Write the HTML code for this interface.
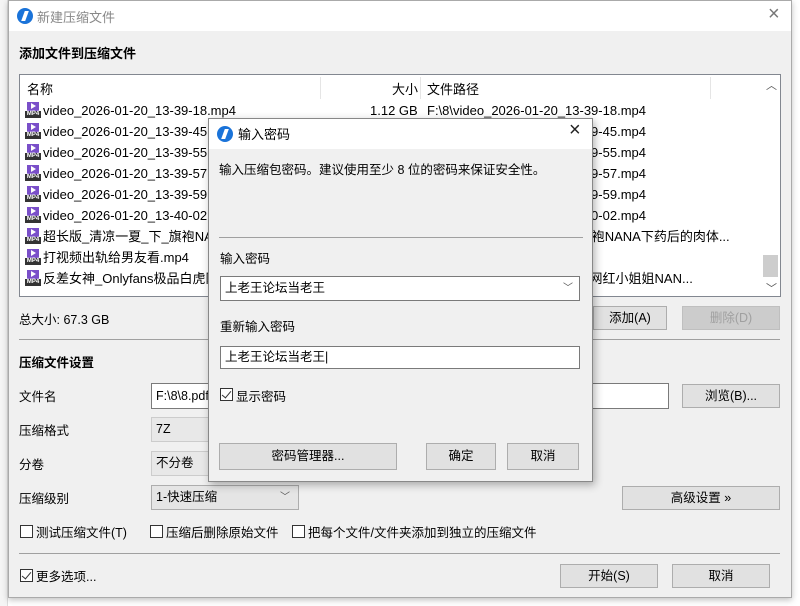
<!DOCTYPE html>
<html><head><meta charset="utf-8"><style>
*{margin:0;padding:0;box-sizing:border-box}
body{width:800px;height:606px;overflow:hidden;background:#fff;font-family:"Liberation Sans","Noto Sans CJK SC",sans-serif;font-size:12.5px;color:#000;position:relative}
.a{position:absolute;white-space:nowrap}
.btn{position:absolute;background:#e1e1e1;border:1px solid #adadad;text-align:center;font-size:12.5px}
.dis{color:#a0a0a0;background:#ccc;border-color:#bfbfbf}
.inp{position:absolute;background:#fff;border:1px solid #7a7a7a;padding-left:4px;font-size:12.5px}
.cb{position:absolute;width:13px;height:13px;border:1px solid #333;background:#fff}
.chk::after{content:"";position:absolute;left:3px;top:0px;width:4px;height:8px;border:solid #333;border-width:0 1.5px 1.5px 0;transform:rotate(40deg)}
.ico{position:absolute;width:16px;height:16px;border-radius:50%;background:#1a73d9}
.ico::after{content:"";position:absolute;left:6px;top:3px;width:4px;height:10px;background:#fff;transform:skewX(-20deg)}
.mp4{position:absolute;width:16px;height:16px}
.mp4 .t{position:absolute;left:2px;top:0;width:12px;height:9px;background:#7a4fc9}
.mp4 .t::after{content:"";position:absolute;left:4px;top:1px;border-left:5px solid #fff;border-top:3.5px solid transparent;border-bottom:3.5px solid transparent}
.mp4 .b{position:absolute;left:0;top:9px;width:16px;height:7px;background:#333;color:#fff;font-size:6px;line-height:7px;text-align:center;font-weight:bold}
</style></head><body>
<div class="a" style="left:0;top:0;width:8px;height:606px;background:#f5f5f5;border-right:1px solid #ddd"></div>
<div class="a" style="left:8px;top:0;width:784px;height:598px;background:#f0f0f0;border:1px solid #aaa;box-shadow:0 2px 6px rgba(0,0,0,.25)"></div>
<div class="a" style="left:9px;top:1px;width:782px;height:30px;background:#fff"></div>
<div class="ico" style="left:17px;top:8px"></div>
<div class="a" style="left:37px;top:7px;color:#888;font-size:13px">新建压缩文件</div>
<div class="a" style="left:768px;top:3px;color:#777;font-size:20px">×</div>
<div class="a" style="left:19px;top:43px;font-weight:bold;font-size:13px">添加文件到压缩文件</div>
<div class="a" style="left:19px;top:74px;width:762px;height:223px;background:#fff;border:1px solid #828790"></div>
<div class="a" style="left:320px;top:77px;width:1px;height:22px;background:#e5e5e5"></div>
<div class="a" style="left:420px;top:77px;width:1px;height:22px;background:#e5e5e5"></div>
<div class="a" style="left:710px;top:77px;width:1px;height:22px;background:#e5e5e5"></div>
<div class="a" style="left:27px;top:79px;font-size:13px">名称</div>
<div class="a" style="left:392px;top:79px;font-size:13px">大小</div>
<div class="a" style="left:427px;top:79px;font-size:13px">文件路径</div>
<div class="a" style="left:763px;top:75px;width:17px;height:221px;background:#fff"></div>
<div class="a" style="left:766px;top:77px;font-size:11px;color:#555">︿</div>
<div class="a" style="left:763px;top:255px;width:15px;height:22px;background:#cdcdcd"></div>
<div class="a" style="left:766px;top:280px;font-size:11px;color:#555">﹀</div>
<div class="mp4" style="left:25px;top:102px"><div class="t"></div><div class="b">MP4</div></div>
<div class="mp4" style="left:25px;top:123px"><div class="t"></div><div class="b">MP4</div></div>
<div class="mp4" style="left:25px;top:144px"><div class="t"></div><div class="b">MP4</div></div>
<div class="mp4" style="left:25px;top:165px"><div class="t"></div><div class="b">MP4</div></div>
<div class="mp4" style="left:25px;top:186px"><div class="t"></div><div class="b">MP4</div></div>
<div class="mp4" style="left:25px;top:207px"><div class="t"></div><div class="b">MP4</div></div>
<div class="mp4" style="left:25px;top:228px"><div class="t"></div><div class="b">MP4</div></div>
<div class="mp4" style="left:25px;top:249px"><div class="t"></div><div class="b">MP4</div></div>
<div class="mp4" style="left:25px;top:270px"><div class="t"></div><div class="b">MP4</div></div>
<div class="a" style="left:43px;top:100px;font-size:13px;line-height:21px">video_2026-01-20_13-39-18.mp4<br>video_2026-01-20_13-39-45.mp4<br>video_2026-01-20_13-39-55.mp4<br>video_2026-01-20_13-39-57.mp4<br>video_2026-01-20_13-39-59.mp4<br>video_2026-01-20_13-40-02.mp4<br>超长版_清凉一夏_下_旗袍NANA<br>打视频出轨给男友看.mp4<br>反差女神_Onlyfans极品白虎网红</div>
<div class="a" style="left:370px;top:100px;font-size:13px;line-height:21px">1.12 GB</div>
<div class="a" style="left:427px;top:100px;font-size:13px;line-height:21px">F:\8\video_2026-01-20_13-39-18.mp4<br>F:\8\video_2026-01-20_13-39-45.mp4<br>F:\8\video_2026-01-20_13-39-55.mp4<br>F:\8\video_2026-01-20_13-39-57.mp4<br>F:\8\video_2026-01-20_13-39-59.mp4<br>F:\8\video_2026-01-20_13-40-02.mp4<br>F:\8\超长版_清凉一夏_下_旗袍NANA下药后的肉体...<br>&nbsp;<br>F:\8\反差女神_Onlyfans白虎网红小姐姐NAN...</div>
<div class="a" style="left:19px;top:309px">总大小: 67.3 GB</div>
<div class="btn" style="left:593px;top:306px;width:74px;height:24px;line-height:22px">添加(A)</div>
<div class="btn dis" style="left:682px;top:306px;width:98px;height:24px;line-height:22px">删除(D)</div>
<div class="a" style="left:19px;top:339px;width:761px;height:1px;background:#a0a0a0"></div>
<div class="a" style="left:19px;top:352px;font-weight:bold">压缩文件设置</div>
<div class="a" style="left:19px;top:386px">文件名</div>
<div class="inp" style="left:151px;top:383px;width:518px;height:26px;line-height:24px">F:\8\8.pdf</div>
<div class="btn" style="left:682px;top:384px;width:98px;height:24px;line-height:22px">浏览(B)...</div>
<div class="a" style="left:19px;top:420px">压缩格式</div>
<div class="inp" style="left:151px;top:417px;width:148px;height:25px;line-height:23px;background:#e8e8e8;border-color:#ccc">7Z</div>
<div class="a" style="left:19px;top:454px">分卷</div>
<div class="inp" style="left:151px;top:451px;width:148px;height:25px;line-height:23px;background:#e8e8e8;border-color:#ccc">不分卷</div>
<div class="a" style="left:19px;top:488px">压缩级别</div>
<div class="inp" style="left:151px;top:485px;width:148px;height:25px;line-height:23px;background:#e5e5e5;border-color:#adadad">1-快速压缩<span style="position:absolute;right:8px;color:#555;font-size:10px">﹀</span></div>
<div class="btn" style="left:622px;top:486px;width:158px;height:24px;line-height:22px">高级设置 »</div>
<div class="cb" style="left:20px;top:525px"></div><div class="a" style="left:36px;top:522px">测试压缩文件(T)</div>
<div class="cb" style="left:150px;top:525px"></div><div class="a" style="left:166px;top:522px">压缩后删除原始文件</div>
<div class="cb" style="left:292px;top:525px"></div><div class="a" style="left:308px;top:522px">把每个文件/文件夹添加到独立的压缩文件</div>
<div class="a" style="left:19px;top:553px;width:761px;height:1px;background:#a0a0a0"></div>
<div class="cb chk" style="left:20px;top:569px"></div><div class="a" style="left:36px;top:566px">更多选项...</div>
<div class="btn" style="left:560px;top:564px;width:98px;height:24px;line-height:22px">开始(S)</div>
<div class="btn" style="left:672px;top:564px;width:98px;height:24px;line-height:22px">取消</div>
<div class="a" style="left:208px;top:118px;width:385px;height:364px;background:#f0f0f0;border:1px solid #888;box-shadow:2px 3px 8px rgba(0,0,0,.3)"></div>
<div class="a" style="left:209px;top:119px;width:383px;height:30px;background:#fff"></div>
<div class="ico" style="left:217px;top:126px"></div>
<div class="a" style="left:238px;top:124px;font-size:13px">输入密码</div>
<div class="a" style="left:569px;top:119px;font-size:20px;color:#222">×</div>
<div class="a" style="left:219px;top:159px">输入压缩包密码。建议使用至少 8 位的密码来保证安全性。</div>
<div class="a" style="left:219px;top:237px;width:364px;height:1px;background:#a0a0a0"></div>
<div class="a" style="left:220px;top:248px">输入密码</div>
<div class="inp" style="left:220px;top:276px;width:360px;height:25px;line-height:23px;border-color:#7a7a7a">上老王论坛当老王<span style="position:absolute;right:6px;color:#555;font-size:10px">﹀</span></div>
<div class="a" style="left:220px;top:316px">重新输入密码</div>
<div class="inp" style="left:220px;top:346px;width:360px;height:23px;line-height:21px">上老王论坛当老王|</div>
<div class="cb chk" style="left:220px;top:388px"></div><div class="a" style="left:236px;top:386px">显示密码</div>
<div class="btn" style="left:219px;top:443px;width:178px;height:27px;line-height:25px">密码管理器...</div>
<div class="btn" style="left:426px;top:443px;width:70px;height:27px;line-height:25px">确定</div>
<div class="btn" style="left:507px;top:443px;width:72px;height:27px;line-height:25px">取消</div>
</body></html>
